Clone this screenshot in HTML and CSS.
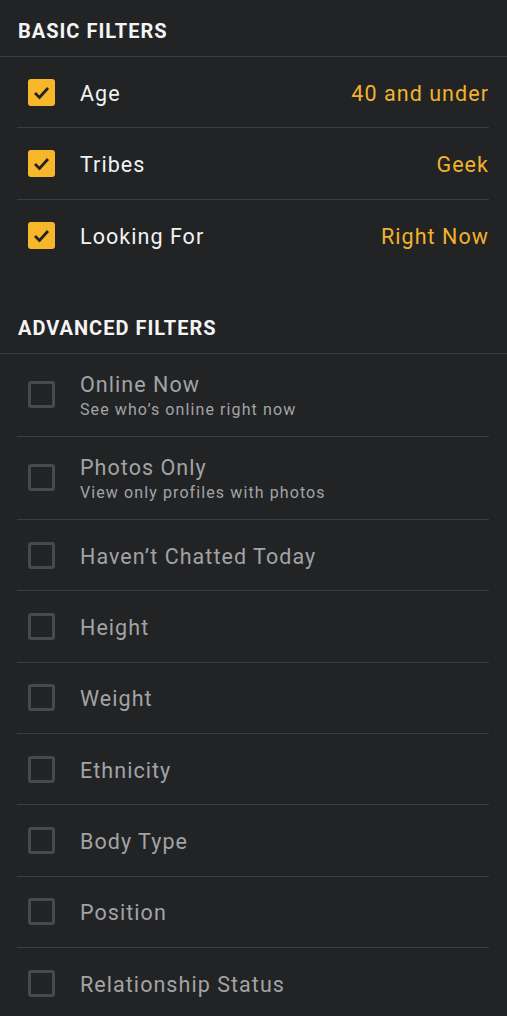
FILE: index.html
```html
<!DOCTYPE html>
<html>
  <head>
    <link rel="stylesheet" href="styles.css">
  </head>
  <body>
    <section class="group">
      <h4 class="group-title">BASIC FILTERS</h4>
      <ul class="list">
        <li class="row">
          <span class="box checked"><svg viewBox="0 0 27 27"><polyline points="7,14 11.5,18.5 20,9" /></svg></span>
          <span class="label">Age</span>
          <span class="value">40 and under</span>
        </li>
        <li class="row">
          <span class="box checked"><svg viewBox="0 0 27 27"><polyline points="7,14 11.5,18.5 20,9" /></svg></span>
          <span class="label">Tribes</span>
          <span class="value">Geek</span>
        </li>
        <li class="row">
          <span class="box checked"><svg viewBox="0 0 27 27"><polyline points="7,14 11.5,18.5 20,9" /></svg></span>
          <span class="label">Looking For</span>
          <span class="value">Right Now</span>
        </li>
      </ul>
    </section>

    <section class="group advanced">
      <h4 class="group-title">ADVANCED FILTERS</h4>
      <ul class="list">
        <li class="row tall">
          <span class="box"></span>
          <div class="text">
            <span class="label">Online Now</span>
            <span class="hint">See who’s online right now</span>
          </div>
        </li>
        <li class="row tall">
          <span class="box"></span>
          <div class="text">
            <span class="label">Photos Only</span>
            <span class="hint">View only profiles with photos</span>
          </div>
        </li>
        <li class="row"><span class="box"></span><span class="label">Haven’t Chatted Today</span></li>
        <li class="row"><span class="box"></span><span class="label">Height</span></li>
        <li class="row"><span class="box"></span><span class="label">Weight</span></li>
        <li class="row"><span class="box"></span><span class="label">Ethnicity</span></li>
        <li class="row"><span class="box"></span><span class="label">Body Type</span></li>
        <li class="row"><span class="box"></span><span class="label">Position</span></li>
        <li class="row"><span class="box"></span><span class="label">Relationship Status</span></li>
      </ul>
    </section>
  </body>
</html>
```

FILE: styles.css
```css
* {
  margin: 0;
  padding: 0;
  box-sizing: border-box;
}

body {
  background: #222325;
  font-family: Roboto, "Noto Sans", sans-serif;
  color: #f2f2f2;
  overflow: hidden;
}

.group-title {
  font-size: 20px;
  font-weight: bold;
  line-height: 28px;
  letter-spacing: 1px;
  padding: 17px 18px 11px;
  border-bottom: 1px solid #3b3c3e;
  color: #f4f4f4;
}

.advanced {
  margin-top: 26px;
}

.list {
  list-style: none;
  margin: 0 18px 0 17px;
}

.row {
  display: flex;
  align-items: center;
  height: 71.33px;
  padding-left: 11px;
  border-bottom: 1px solid #3b3c3e;
}

.row:last-child {
  border-bottom: 0;
}

.row.tall {
  height: 83px;
}

.box {
  flex: none;
  width: 27px;
  height: 27px;
  border: 3px solid #48494c;
  border-radius: 3px;
  margin-right: 25px;
}

.box.checked {
  border: 0;
  background: #f8b72a;
}

.box svg {
  display: block;
  width: 27px;
  height: 27px;
}

.box polyline {
  fill: none;
  stroke: #222325;
  stroke-width: 2.8;
}

.label,
.value {
  font-size: 21.5px;
  letter-spacing: 1.05px;
  padding-top: 2px;
}

.value {
  margin-left: auto;
  color: #f3b22d;
}

.advanced .label {
  color: #a2a3a6;
}

.text {
  display: flex;
  flex-direction: column;
  padding-top: 2px;
}

.text .label {
  padding-top: 0;
}

.hint {
  font-size: 16px;
  letter-spacing: 1.1px;
  color: #a2a3a6;
  margin-top: 3px;
}
```
